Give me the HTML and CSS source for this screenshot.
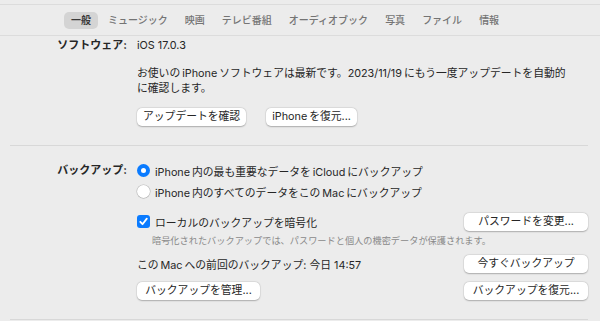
FILE: index.html
```html
<!DOCTYPE html>
<html lang="ja">
<head>
<meta charset="utf-8">
<link rel="stylesheet" href="styles.css">
</head>
<body>
<div class="window">
  <nav class="tabs">
    <span class="tab active">一般</span>
    <span class="tab">ミュージック</span>
    <span class="tab">映画</span>
    <span class="tab">テレビ番組</span>
    <span class="tab">オーディオブック</span>
    <span class="tab">写真</span>
    <span class="tab">ファイル</span>
    <span class="tab">情報</span>
  </nav>

  <section class="section software">
    <div class="row">
      <div class="label">ソフトウェア:</div>
      <div class="content">
        <div class="value">iOS 17.0.3</div>
        <p class="para">お使いの&thinsp;iPhone&thinsp;ソフトウェアは最新です。2023/11/19&thinsp;にもう一度アップデートを自動的<br>に確認します。</p>
        <div class="btns">
          <button class="btn">アップデートを確認</button>
          <button class="btn">iPhone&thinsp;を復元...</button>
        </div>
      </div>
    </div>
  </section>

  <section class="section backup">
    <div class="row">
      <div class="label label-backup">バックアップ:</div>
      <div class="content">
        <div class="opt">
          <span class="radio on"></span>
          <span>iPhone&thinsp;内の最も重要なデータを&thinsp;iCloud&thinsp;にバックアップ</span>
        </div>
        <div class="opt">
          <span class="radio"></span>
          <span>iPhone&thinsp;内のすべてのデータをこの&thinsp;Mac&thinsp;にバックアップ</span>
        </div>
        <div class="line line-check">
          <div class="opt-inline">
            <span class="check">
              <svg viewBox="0 0 13 13" width="13" height="13"><path d="M3.3 6.8 L5.5 9.2 L9.8 3.6" fill="none" stroke="#fff" stroke-width="1.8" stroke-linecap="round" stroke-linejoin="round"/></svg>
            </span>
            <span>ローカルのバックアップを暗号化</span>
          </div>
          <button class="btn btn-wide">パスワードを変更...</button>
        </div>
        <div class="note">暗号化されたバックアップでは、パスワードと個人の機密データが保護されます。</div>
        <div class="line line-last">
          <span>この&thinsp;Mac&thinsp;への前回のバックアップ: 今日 14:57</span>
          <button class="btn btn-wide">今すぐバックアップ</button>
        </div>
        <div class="line line-bottom">
          <button class="btn btn-manage">バックアップを管理...</button>
          <button class="btn btn-wide">バックアップを復元...</button>
        </div>
      </div>
    </div>
  </section>
</div>
</body>
</html>
```

FILE: styles.css
```css
* { box-sizing: border-box; }
html, body {
  margin: 0;
  padding: 0;
  background: #ececec;
  width: 600px;
  height: 321px;
  overflow: hidden;
}
body {
  font-family: "Inter", "Noto Sans CJK JP", sans-serif;
  font-size: 10.8px;
  color: #262626;
}
.window {
  margin-top: 4px;
  border-top: 1px solid #dcdcdc;
}
.tabs {
  display: flex;
  gap: 3px;
  padding: 7px 0 0 64px;
  height: 31px;
  border-bottom: 1px solid #dcdcdc;
}
.tab {
  height: 17px;
  line-height: 17px;
  padding: 0 7px;
  font-size: 10px;
  font-weight: 500;
  color: #747474;
  border-radius: 5px;
}
.tab.active {
  background: #d4d4d4;
  color: #3a3a3a;
  font-weight: 700;
}
.section {
  margin: 0 12px 0 10px;
}
.software {
  padding-top: 2px;
  padding-bottom: 19px;
  border-bottom: 1px solid #d8d8d8;
}
.row {
  display: flex;
  gap: 10px;
}
.label {
  width: 117px;
  text-align: right;
  font-weight: 700;
  font-size: 11px;
  line-height: 15px;
  color: #262626;
}
.label-backup {
  margin-top: 17px;
}
.content {
  flex: 1;
}
.value {
  line-height: 15px;
}
.para {
  margin: 13px 0 0 0;
  line-height: 15px;
}
.btns {
  display: flex;
  gap: 20px;
  margin-top: 12px;
}
.btn {
  font: inherit;
  color: #262626;
  height: 18px;
  line-height: 18px;
  padding: 0 6px;
  border: none;
  border-radius: 5px;
  background: #ffffff;
  box-shadow: 0 0.5px 1.5px rgba(0,0,0,0.25), 0 0 0 0.5px rgba(0,0,0,0.06);
  white-space: nowrap;
}
.btn-wide {
  width: 124px;
  padding: 0;
  text-align: center;
}
.btn-manage {
  width: 123px;
  padding: 0;
  text-align: center;
}
.backup {
  padding-bottom: 19px;
  border-bottom: 1px solid #d8d8d8;
}
.backup .content {
  padding-top: 14px;
}
.opt {
  display: flex;
  align-items: center;
  gap: 5px;
  height: 21px;
}
.opt-inline {
  display: flex;
  align-items: center;
  gap: 5px;
}
.radio {
  width: 13px;
  height: 13px;
  border-radius: 50%;
  background: #fff;
  box-shadow: 0 0 0 0.5px rgba(0,0,0,0.2), 0 0.5px 1px rgba(0,0,0,0.15);
  flex: none;
  position: relative;
}
.radio.on {
  background: #0a7bff;
  box-shadow: none;
}
.radio.on::after {
  content: "";
  position: absolute;
  left: 4px;
  top: 4px;
  width: 5px;
  height: 5px;
  border-radius: 50%;
  background: #fff;
}
.check {
  width: 13px;
  height: 13px;
  border-radius: 3px;
  background: #0a7bff;
  flex: none;
  display: flex;
}
.line {
  display: flex;
  align-items: center;
  justify-content: space-between;
  height: 19px;
}
.line-check {
  margin-top: 10px;
}
.note {
  font-size: 9.2px;
  color: #8a8a8a;
  line-height: 13px;
  margin-top: 3px;
  padding-left: 15px;
}
.line-last {
  margin-top: 7px;
}
.line-bottom {
  margin-top: 8px;
}
```
